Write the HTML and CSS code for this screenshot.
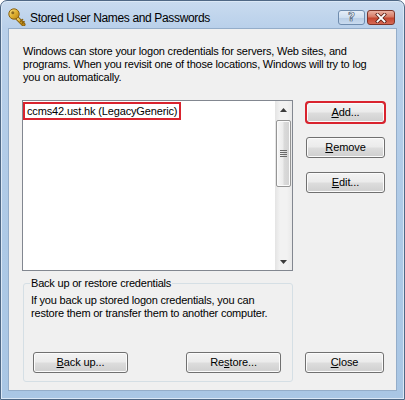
FILE: index.html
```html
<!DOCTYPE html>
<html>
<head>
<meta charset="utf-8">
<link rel="stylesheet" href="styles.css">
</head>
<body>
<div class="window">
  <div class="titlebar">
    <svg class="app-icon" width="18" height="18" viewBox="0 0 18 18">
      <defs>
        <linearGradient id="gold" x1="0" y1="0" x2="1" y2="1">
          <stop offset="0" stop-color="#fbe48a"/>
          <stop offset="0.5" stop-color="#e0b232"/>
          <stop offset="1" stop-color="#b98310"/>
        </linearGradient>
      </defs>
      <path d="M8.5 9.5 L15.5 16.5" stroke="#8a6210" stroke-width="4" stroke-linecap="round"/>
      <path d="M8.5 9.5 L15.5 16.5" stroke="url(#gold)" stroke-width="2.2" stroke-linecap="round"/>
      <path d="M12.5 13.5 L14.5 11.5 M14.3 15.3 L16 13.6" stroke="#8a6210" stroke-width="1.6" stroke-linecap="round"/>
      <circle cx="6" cy="6" r="5.2" fill="url(#gold)" stroke="#8a6210" stroke-width="1"/>
      <circle cx="4.8" cy="4.8" r="1.5" fill="#8a6a20"/>
    </svg>
    <span class="title">Stored User Names and Passwords</span>
    <div class="caption-btns">
      <span class="cap help">?</span>
      <span class="cap close">
        <svg width="14" height="10" viewBox="0 0 14 10">
          <path d="M3.5 1.5 L10.5 8.5 M10.5 1.5 L3.5 8.5" stroke="#5a2018" stroke-width="3.4" stroke-linecap="square"/>
          <path d="M3.5 1.5 L10.5 8.5 M10.5 1.5 L3.5 8.5" stroke="#ffffff" stroke-width="1.8" stroke-linecap="square"/>
        </svg>
      </span>
    </div>
  </div>
  <div class="client">
    <p class="intro">Windows can store your logon credentials for servers, Web sites, and<br>programs. When you revisit one of those locations, Windows will try to log<br>you on automatically.</p>
    <div class="main">
      <div class="listbox">
        <div class="items"><span class="item">ccms42.ust.hk (LegacyGeneric)</span></div>
        <div class="vscroll">
          <div class="sb-arrow"><svg width="7" height="4" viewBox="0 0 7 4"><path d="M0 4 L3.5 0 L7 4 Z" fill="#3c3c3c"/></svg></div>
          <div class="sb-track">
            <div class="sb-thumb">
              <svg width="7" height="7" viewBox="0 0 7 7"><path d="M0 0.5 H7 M0 2.5 H7 M0 4.5 H7 M0 6.5 H7" stroke="#6a6a6a" stroke-width="1"/></svg>
            </div>
          </div>
          <div class="sb-arrow"><svg width="7" height="4" viewBox="0 0 7 4"><path d="M0 0 L7 0 L3.5 4 Z" fill="#3c3c3c"/></svg></div>
        </div>
      </div>
      <div class="side">
        <button class="btn marked"><u>A</u>dd...</button>
        <button class="btn"><u>R</u>emove</button>
        <button class="btn"><u>E</u>dit...</button>
      </div>
    </div>
    <div class="bottom">
      <fieldset class="group">
        <legend>Back up or restore credentials</legend>
        <p class="group-text">If you back up stored logon credentials, you can<br>restore them or transfer them to another computer.</p>
        <div class="group-btns">
          <button class="btn wide"><u>B</u>ack up...</button>
          <button class="btn wide">Re<u>s</u>tore...</button>
        </div>
      </fieldset>
      <button class="btn close-btn"><u>C</u>lose</button>
    </div>
  </div>
</div>
</body>
</html>
```
FILE: styles.css
```css
* { box-sizing: border-box; }
html, body { margin: 0; padding: 0; }
body {
  width: 405px;
  height: 400px;
  overflow: hidden;
  font-family: "Liberation Sans", Arial, sans-serif;
  font-size: 11px;
  letter-spacing: -0.2px;
  color: #000;
  background: #fff;
}
.window {
  width: 405px;
  height: 400px;
  border: 1px solid #4f6885;
  border-radius: 7px 7px 0 0;
  background: linear-gradient(#c9dbef 0, #b9d0ea 27px, #adc9e6 60%, #a9c6e4 100%);
  display: flex;
  flex-direction: column;
  padding: 0 7px 8px;
  box-shadow: inset 0 0 0 1px #dbe8f6;
}
.titlebar {
  height: 27px;
  display: flex;
  align-items: flex-start;
  flex: none;
}
.app-icon { margin-top: 7px; margin-left: 0; flex: none; }
.title {
  margin-top: 9px;
  margin-left: 4px;
  font-size: 12px;
  letter-spacing: -0.35px;
  line-height: 16px;
  color: #000;
}
.caption-btns {
  margin-left: auto;
  margin-right: 2px;
  margin-top: 9px;
  display: flex;
  gap: 2px;
}
.cap {
  height: 15px;
  border-radius: 3px;
  display: flex;
  align-items: center;
  justify-content: center;
}
.help {
  width: 27px;
  border: 1px solid #6f8cae;
  background: linear-gradient(#e6eef8 0, #cfdff0 50%, #b8cde5 51%, #c9dbef 100%);
  font-family: "DejaVu Sans", sans-serif;
  font-weight: bold;
  font-size: 12px;
  letter-spacing: 0;
  line-height: 13px;
  color: #f6f9fc;
  -webkit-text-stroke: 0.7px #4b5d76;
}
.close {
  width: 28px;
  border: 1px solid #7d3429;
  background: linear-gradient(#eab1a2 0, #d77a66 45%, #c4452f 55%, #d66a55 100%);
}
.client {
  flex: 1;
  background: #f0f0f0;
  border: 1px solid #94adc9;
  padding: 16px 11px 0 13px;
  display: flex;
  flex-direction: column;
}
.intro {
  margin: 0 0 16px 1px;
  line-height: 13px;
  white-space: nowrap;
}
.main {
  display: flex;
  align-items: flex-start;
}
.listbox {
  width: 271px;
  height: 171px;
  border: 1px solid #828790;
  background: #fff;
  display: flex;
  flex: none;
}
.items {
  flex: 1;
  padding-top: 1px;
}
.item {
  display: inline-block;
  height: 18px;
  line-height: 14px;
  padding: 0 2px 0 2px;
  border: 2px solid #d9232e;
  white-space: nowrap;
  letter-spacing: -0.15px;
}
.vscroll {
  width: 17px;
  display: flex;
  flex-direction: column;
  background: linear-gradient(90deg, #e4e4e4 0, #f2f2f2 30%, #f2f2f2 70%, #e9e9e9 100%);
}
.sb-arrow {
  height: 17px;
  display: flex;
  align-items: center;
  justify-content: center;
  flex: none;
}
.sb-track {
  flex: 1;
  padding: 2px 1px 0;
}
.sb-thumb {
  height: 67px;
  border: 1px solid #959595;
  border-radius: 2px;
  background: linear-gradient(90deg, #f7f7f7 0, #ececec 45%, #dadada 55%, #d2d2d2 100%);
  box-shadow: inset 0 0 0 1px #fbfbfb;
  display: flex;
  align-items: center;
  justify-content: center;
}
.side {
  margin-left: 13px;
  padding-top: 2px;
  display: flex;
  flex-direction: column;
  gap: 14px;
}
.btn {
  width: 79px;
  height: 21px;
  margin: 0;
  padding: 0;
  border: 1px solid #707070;
  border-radius: 3px;
  background: linear-gradient(#f3f3f3 0, #ebebeb 48%, #dddddd 52%, #cfcfcf 100%);
  box-shadow: inset 0 0 0 1px #fbfbfb;
  font-family: "Liberation Sans", Arial, sans-serif;
  font-size: 11px;
  letter-spacing: -0.1px;
  line-height: 17px;
  color: #000;
  text-align: center;
}
.btn u { text-decoration-thickness: 1px; text-underline-offset: 1px; }
.btn.marked {
  outline: 2px solid #d9232e;
  outline-offset: -1px;
}
.btn.wide { width: 95px; }
.bottom {
  margin-top: 6px;
  display: flex;
  align-items: flex-end;
}
.group {
  width: 270px;
  margin: 0 0 0 1px;
  padding: 0 0 8px 6px;
  border: 1px solid #d5dfe5;
  border-radius: 3px;
  min-inline-size: 0;
}
.group legend {
  padding: 0 1px;
  line-height: 13px;
}
.group-text {
  margin: 4px 0 0 1px;
  line-height: 13px;
  white-space: nowrap;
}
.group-btns {
  margin-top: 32px;
  margin-left: 3px;
  display: flex;
  gap: 58px;
}
.close-btn {
  margin-left: 12px;
  margin-bottom: 9px;
}
```
